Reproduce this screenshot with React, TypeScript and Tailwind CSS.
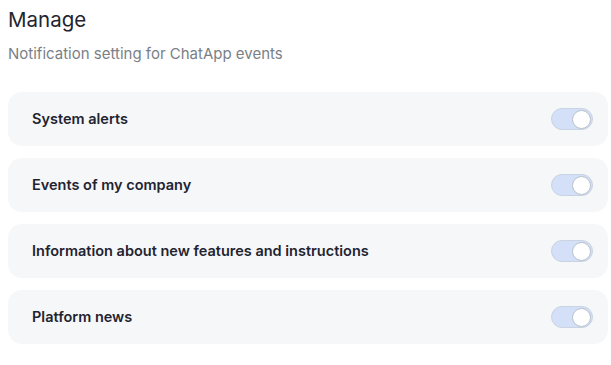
const items = [
  "System alerts",
  "Events of my company",
  "Information about new features and instructions",
  "Platform news",
];

function Toggle() {
  return (
    <div className="flex h-[22px] w-[42px] items-center justify-end rounded-full border border-[#c9d3e2] bg-[#d3e0f7] p-[1px]">
      <div className="h-[19px] w-[19px] rounded-full border border-[#b9c1cc] bg-white" />
    </div>
  );
}

export default function App() {
  return (
    <div
      className="bg-white pl-2 pr-[3px] pt-[6px]"
      style={{ fontFamily: "Inter, 'Noto Sans', sans-serif" }}
    >
      <h1 className="text-[20.5px] leading-7 text-[#1e2530]">Manage</h1>
      <p className="mt-[10px] text-[15px] leading-5 text-[#7a7f87]">
        Notification setting for ChatApp events
      </p>
      <div className="mt-[28px] flex flex-col gap-3">
        {items.map((label) => (
          <div
            key={label}
            className="flex h-[54px] items-center justify-between rounded-[14px] bg-[#f6f7f9] pl-6 pr-[15px]"
          >
            <span className="text-[14.5px] font-semibold text-[#1f2430]">{label}</span>
            <Toggle />
          </div>
        ))}
      </div>
    </div>
  );
}
